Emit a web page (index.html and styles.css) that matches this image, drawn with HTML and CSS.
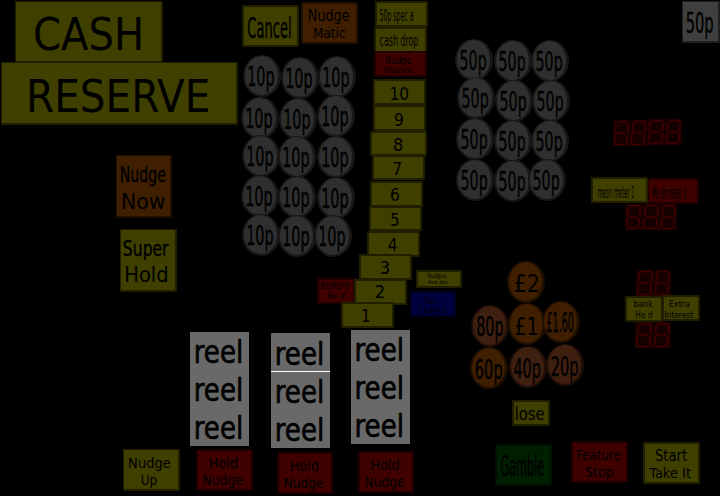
FILE: index.html
```
<!DOCTYPE html>
<html lang="en">
<head>
<meta charset="utf-8">
<title>Cash Reserve</title>
<link rel="stylesheet" href="styles.css">
</head>
<body>
<main class="canvas" id="canvas"></main>
<script src="lamps.js"></script>
</body>
</html>
```
FILE: styles.css
```
* { box-sizing: border-box; }
body {
  margin: 0;
  background: #000;
  font-family: "DejaVu Sans", sans-serif;
}
/* free canvas: every lamp, reel and display keeps its own place */
.canvas {
  position: relative;
  width: 720px;
  height: 496px;
  overflow: hidden;
  background: #000;
}
.lamp {
  position: absolute;
  border: 2px solid;
}
.thin { border-width: 1px 2px 2px 1px; }
.yellow { background: #3f3f00; border-color: #1f1f00; }
.orange { background: #3f1f00; border-color: #1f0f00; }
.copper { background: #3f1f10; border-color: #1f0f08; }
.red { background: #3f0000; border-color: #1f0000; }
.blue { background: #00003f; border-color: #00001f; }
.green { background: #001f00; border-color: #000f00; }
.silver { background: #2f2f2f; border-color: #171717; }
.grey { background: #3f3f3f; border-color: #1f1f1f; }
.coin {
  width: 38px;
  height: 42px;
  border-width: 1px 3px 2px 2px;
  border-radius: 50%;
}
.reel {
  position: absolute;
  background: #696969;
}
.winline {
  position: absolute;
  height: 1px;
  background: #fff;
}
.digit {
  position: absolute;
  background: #170000;
}
.digit svg { display: block; width: 100%; height: 100%; }
.segments { stroke: #3f0000; stroke-width: 1.7; fill: none; }
.point { fill: #3f0000; }
.captions {
  position: absolute;
  overflow: visible;
  width: 1px;
  height: 1px;
  left: 0;
  top: 0;
  fill: #000;
}
.narrow { stroke: #000; stroke-width: 0.4; }
.strong { stroke: #000; stroke-width: 0.7; }
```
FILE: lamps.js
```
const canvas = document.getElementById('canvas');
const pen = document.createElement('canvas').getContext('2d');
const NS = 'http://www.w3.org/2000/svg';

function box(cls, x, y, w, h) {
  const el = document.createElement('div');
  el.className = cls;
  el.style.left = x + 'px';
  el.style.top = y + 'px';
  if (w) { el.style.width = w + 'px'; el.style.height = h + 'px'; }
  canvas.append(el);
  return el;
}

// Each caption: [text, left edge, right edge, baseline, font size], stretched between its edges.
function captions(lines, weight) {
  const svg = document.createElementNS(NS, 'svg');
  svg.setAttribute('class', 'captions');
  for (const [text, x0, x1, base, size] of lines) {
    pen.font = '100px "DejaVu Sans"';
    const m = pen.measureText(text);
    const ink = (m.actualBoundingBoxLeft + m.actualBoundingBoxRight) * size / 100;
    const sx = (x1 - x0) / ink;
    const tx = x0 + m.actualBoundingBoxLeft * size / 100 * sx;
    const t = document.createElementNS(NS, 'text');
    const cls = weight || (sx < 0.75 && size > 20 ? 'narrow' : '');
    if (cls) t.setAttribute('class', cls);
    t.setAttribute('font-size', size);
    t.setAttribute('transform', `translate(${tx} ${base}) scale(${sx} 1)`);
    t.textContent = text;
    svg.append(t);
  }
  canvas.append(svg);
}

function lamp(cls, x0, y0, x1, y1, ...lines) {
  box('lamp ' + cls, x0, y0, x1 - x0, y1 - y0);
  captions(lines);
}

function coin(cls, x, y, text, x0 = x + 5.6, x1 = x + 31, base = y + 31.3, size = 26) {
  box('lamp coin ' + cls, x, y);
  captions([[text, x0, x1, base, size]]);
}

function digits(xs, ys, h) {
  for (let i = 0; i < xs.length - 1; i++) {
    const d = box('digit', xs[i], ys[i], xs[i + 1] - xs[i], h);
    d.innerHTML = '<svg viewBox="0 0 17 26" preserveAspectRatio="none">' +
      '<path class="segments" d="M4 1.7H15M3 13H13M1.500 24.500H13M3.200 2.500L2.300 12M2 14L1.300 23.500M15.500 2.500L14.700 12M14.300 14L13.600 23.500"/>' +
      '<rect class="point" x="15" y="23.500" width="1.600" height="2"/></svg>';
  }
}

lamp('yellow thin', 15, 1, 163, 63, ['CASH', 35, 140.5, 50, 44.5]);
lamp('yellow thin', 1, 62, 238, 125, ['RESERVE', 29.7, 208, 111.7, 44.5]);
lamp('yellow', 242, 5, 299, 47, ['Cancel', 248, 290.5, 37.5, 28]);
lamp('orange', 301, 2, 358, 44, ['Nudge', 309, 349, 21.3, 15.5], ['Matic', 314, 345, 38, 14.3]);

[[243, 55], [281, 57], [318, 56],
 [241, 97], [279, 98], [317, 95],
 [242, 135], [278, 136], [317, 136],
 [241, 175], [278, 176], [317, 177],
 [242, 214], [278, 215], [314, 215]].forEach(([x, y]) => coin('silver', x, y, '10p'));

[[455, 39], [494, 40], [531, 40],
 [457, 77], [495, 80], [532, 80],
 [456, 118], [494, 120], [531, 120],
 [456, 159], [494, 160], [528, 159]].forEach(([x, y]) => coin('silver', x, y, '50p'));

lamp('yellow', 375, 1, 428, 27, ['50p spec a', 380, 413, 20.5, 16.5]);
lamp('yellow', 374, 27, 427, 53, ['cash drop', 380, 418, 46, 15.5]);
lamp('red', 374, 51, 427, 77, ['Nudge', 385.7, 411, 63.5, 10.3], ['Feature', 385, 412, 73.3, 8.3]);
lamp('yellow', 373, 79, 426, 105, ['10', 391, 408, 99.7, 17.5]);
lamp('yellow', 373, 105, 426, 131, ['9', 395, 403, 125.5, 17.5]);
lamp('yellow', 370, 131, 427, 156, ['8', 394, 402.3, 150.7, 17.5]);
lamp('yellow', 372, 155, 425, 180, ['7', 393.5, 401, 174.7, 17.5]);
lamp('yellow', 370, 181, 423, 207, ['6', 391, 399, 200.7, 17.5]);
lamp('yellow', 369, 206, 422, 231, ['5', 391.3, 398.3, 225.6, 17.5]);
lamp('yellow', 367, 231, 420, 257, ['4', 388.3, 396.8, 251, 17.5]);
lamp('yellow', 359, 254, 412, 280, ['3', 380.7, 389, 274.3, 17.5]);
lamp('red', 317, 278, 355, 304, ['feature', 321, 349.3, 289, 10.5], ['He d', 327.7, 344.3, 299.3, 9.3]);
lamp('yellow', 354, 279, 407, 305, ['2', 376, 383.7, 298.3, 17.5]);
lamp('yellow', 341, 302, 394, 328, ['1', 362.8, 369.3, 321.7, 17.5]);
lamp('yellow', 416, 270, 462, 288, ['Nudges', 427.7, 446, 278, 6.5], ['Avai abe', 428.3, 447, 284, 5.3]);
lamp('blue', 410, 291, 456, 317, ['Ski', 425, 435.7, 303.7, 9.5], ['Chance', 419, 446, 313.3, 9]);

lamp('grey thin', 682, 1, 720, 43, ['50p', 686.7, 713, 33.3, 28.5]);
digits([613, 630, 647, 665, 682], [120, 120, 119, 119], 26);
digits([625, 642, 660, 677], [204, 204, 204], 26);
digits([636, 654, 671], [270, 270], 26);
digits([635, 653, 671], [322, 322], 26);
lamp('red', 647, 178, 699, 204, ['Me on meter 2', 653, 686, 199, 17]);
lamp('yellow', 591, 177, 648, 203, ['meon meter 1', 598.3, 634, 197.7, 16.5]);
lamp('yellow', 662, 295, 700, 321, ['Extra', 669.7, 689.3, 307, 9.5], ['Interest', 665, 693, 317.5, 9]);
lamp('yellow', 625, 296, 663, 322, ['bank', 634, 652.8, 307, 9.5], ['He d', 636, 652, 317.5, 9]);

coin('orange', 507, 261, '£2', 515, 538, 292.3, 25);
coin('orange', 508, 303, '£1', 515.3, 537.3, 335, 25);
coin('orange', 542, 301, '£1.60', 547, 573.3, 331.7, 26);
coin('copper', 471, 305, '80p', 477, 503, 336, 26);
coin('orange', 470, 347, '60p', 475.7, 502, 379.3, 26);
coin('copper', 509, 346, '40p', 514, 540.3, 377.7, 26);
coin('copper', 546, 344, '20p', 551.7, 578, 376.3, 26);
lamp('yellow', 512, 400, 550, 426, ['lose', 516, 544, 420, 17]);

lamp('orange thin', 116, 155, 172, 218, ['Nudge', 121, 165.3, 181.7, 21], ['Now', 122.8, 164.8, 209, 21]);
lamp('yellow thin', 120, 229, 177, 292, ['Super', 123.8, 168.7, 255.5, 21.5], ['Hold', 126, 167, 282, 21.5]);

for (const [x, y, h, left, base] of [[190, 332, 114, 196, 363], [271, 333, 115, 277, 364.5], [351, 330, 114, 356.8, 361]]) {
  box('reel', x, y, 59, h);
  captions([0, 38, 76].map(dy => ['reel', left, left + 45, base + dy, 31.5]), 'strong');
}
box('winline', 271, 371, 59, 1);

lamp('yellow thin', 123, 449, 180, 491, ['Nudge', 129.3, 170.3, 468, 14.7], ['Up', 141.7, 156.7, 485, 14]);
lamp('red', 196, 449, 253, 491, ['Hold', 210, 237, 468, 14.5], ['Nudge', 203.7, 242.3, 485.3, 14]);
lamp('red', 277, 452, 333, 494, ['Hold', 291, 318, 471, 14.5], ['Nudge', 284.7, 323, 488, 14]);
lamp('red', 358, 451, 414, 493, ['Hold', 371.7, 398.7, 470, 14.5], ['Nudge', 365.7, 404, 487.3, 14]);
lamp('green', 495, 444, 552, 486, ['Gamble', 501, 543.7, 476, 28]);
lamp('red', 571, 441, 628, 483, ['Feature', 577.3, 620.3, 460, 14.7], ['Stop', 585.7, 613.3, 477, 14]);
lamp('yellow', 643, 442, 700, 484, ['Start', 655.7, 687, 461, 15], ['Take It', 649, 690.7, 478, 14]);
```
